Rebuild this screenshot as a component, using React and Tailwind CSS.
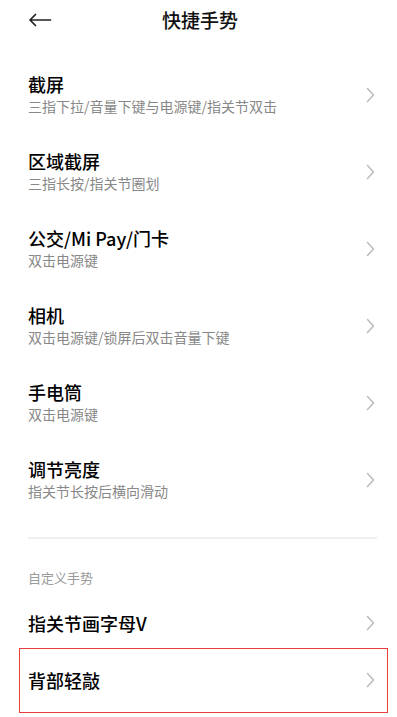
import React from 'react';

const items = [
  { title: '截屏', desc: '三指下拉/音量下键与电源键/指关节双击' },
  { title: '区域截屏', desc: '三指长按/指关节圈划' },
  { title: '公交/Mi Pay/门卡', desc: '双击电源键' },
  { title: '相机', desc: '双击电源键/锁屏后双击音量下键' },
  { title: '手电筒', desc: '双击电源键' },
  { title: '调节亮度', desc: '指关节长按后横向滑动' },
];

function Chevron() {
  return (
    <svg width="9" height="16" viewBox="0 0 9 16" fill="none" className="shrink-0">
      <polyline points="1.5,1.5 7.5,8 1.5,14.5" stroke="#b8b8b8" strokeWidth="1.4" strokeLinecap="round" strokeLinejoin="round" />
    </svg>
  );
}

export default function App() {
  return (
    <div className="w-[397px] h-[717px] bg-white overflow-hidden" style={{ fontFamily: '"Noto Sans CJK SC", "Noto Sans", sans-serif' }}>
      <div className="h-10 grid grid-cols-[1fr_auto_1fr] items-center">
        <div className="pl-[28px] flex items-center">
          <svg width="24" height="14" viewBox="0 0 24 14" fill="none">
            <path d="M22.5 7H2M7.5 1.5L2 7l5.5 5.5" stroke="#222" strokeWidth="1.7" strokeLinecap="round" strokeLinejoin="round" />
          </svg>
        </div>
        <span className="pl-[3px] text-[19px] leading-6 font-medium text-[#111]">快捷手势</span>
        <div />
      </div>

      <div className="mt-[16px]">
        {items.map((it) => (
          <div key={it.title} className="h-[77px] pl-7 pr-[22px] flex items-center justify-between">
            <div className="flex flex-col">
              <span className="text-[18px] leading-[22px] font-medium text-black">{it.title}</span>
              <span className="mt-[1px] text-[14px] leading-[20px] text-[#888888]">{it.desc}</span>
            </div>
            <Chevron />
          </div>
        ))}
      </div>

      <div className="mt-[19px] ml-7 mr-5 h-[1.5px] bg-[#efefef]" />

      <div className="mt-[30px] pl-7 text-[13px] leading-[18px] text-[#9a9a9a]">自定义手势</div>

      <div className="mt-[11px] h-[50px] pl-7 pr-[22px] flex items-center justify-between">
        <span className="text-[18px] leading-[22px] font-medium text-black">指关节画字母V</span>
        <Chevron />
      </div>

      <div className="mx-[19px] w-[369px] h-[65px] border border-[#e83e3e] pl-2 pr-[12px] flex items-center justify-between">
        <span className="text-[18px] leading-[22px] font-medium text-black">背部轻敲</span>
        <Chevron />
      </div>
    </div>
  );
}
